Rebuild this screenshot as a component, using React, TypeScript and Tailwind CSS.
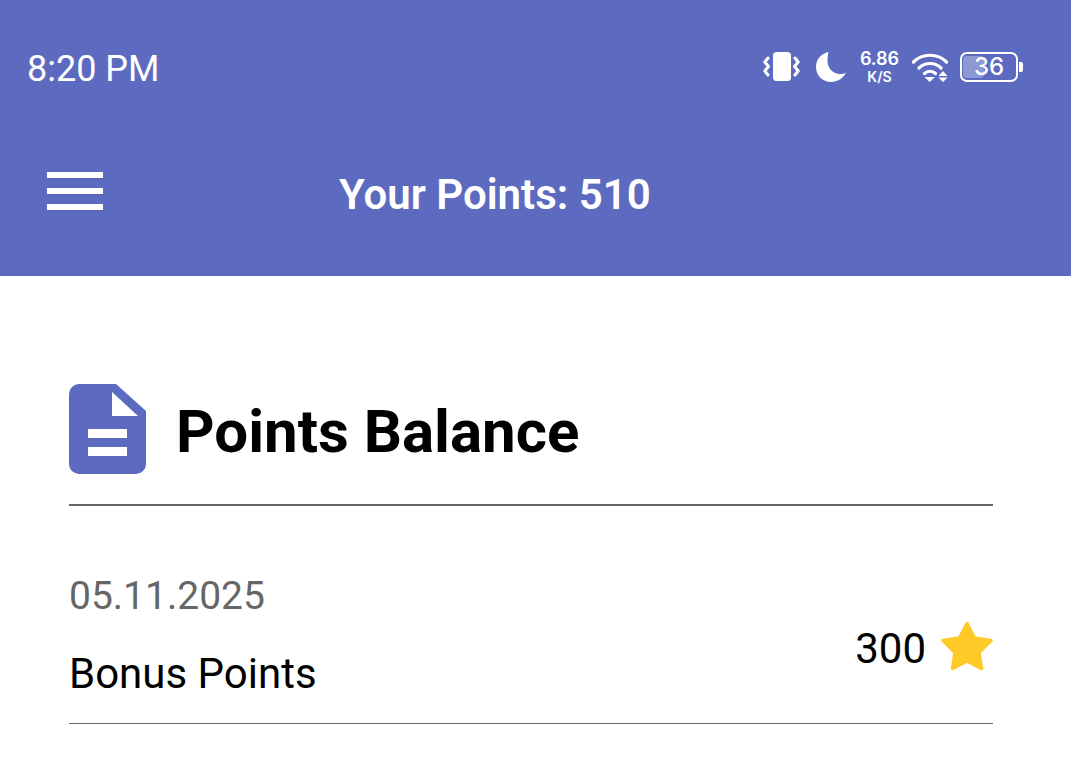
import React from "react";

const Vibrate = () => (
  <svg width="37" height="30" viewBox="0 0 37 30" className="block">
    <rect x="10" y="0" width="18" height="29" rx="3.5" fill="#fff" />
    <path d="M5 6 L1.8 10 L5.5 14.5 L1.8 19 L5 23" fill="none" stroke="#fff" strokeWidth="3" strokeLinejoin="round" strokeLinecap="round" />
    <path d="M32 6 L35.2 10 L31.5 14.5 L35.2 19 L32 23" fill="none" stroke="#fff" strokeWidth="3" strokeLinejoin="round" strokeLinecap="round" />
  </svg>
);

const Moon = () => (
  <svg width="30" height="30" viewBox="0 0 30 30" className="block">
    <path d="M12.5 0 C5 1.5 0 7.5 0 15 C0 23.5 6.7 30 15 30 C21.5 30 27 26.5 30 20.5 C28.5 21.5 26.5 22 24 22 C17 22 11.5 16 11.5 9 C11.5 6 11.8 2.5 12.5 0 Z" fill="#fff" />
  </svg>
);

const Wifi = () => (
  <svg width="36" height="29" viewBox="0 0 36 29" className="block">
    <path d="M1.5 9 C10.5 0 25.5 0 34.5 9" fill="none" stroke="#fff" strokeWidth="3.2" strokeLinecap="round" />
    <path d="M7 15 C13 9 23 9 29 15" fill="none" stroke="#fff" strokeWidth="3.2" strokeLinecap="round" />
    <path d="M12.5 20.5 C15.5 17.5 20.5 17.5 23.5 20.5" fill="none" stroke="#fff" strokeWidth="3.2" strokeLinecap="round" />
    <path d="M12.5 24 L23 24 L17.7 29 Z" fill="#fff" />
    <path d="M31 18 L35.5 23 L26.5 23 Z" fill="#fff" />
    <path d="M26.5 24.5 L35.5 24.5 L31 29 Z" fill="#fff" />
  </svg>
);

const FileDoc = () => (
  <svg width="77" height="90" viewBox="0 0 77 90" className="block shrink-0">
    <path d="M10 0 H47 L77 27 V80 A10 10 0 0 1 67 90 H10 A10 10 0 0 1 0 80 V10 A10 10 0 0 1 10 0 Z" fill="#5c6bc0" />
    <path d="M43 8 L69 32 H43 Z" fill="#fff" />
    <rect x="19" y="45" width="39" height="9" fill="#fff" />
    <rect x="19" y="63" width="39" height="9" fill="#fff" />
  </svg>
);

const Star = () => (
  <svg width="52" height="50" viewBox="0 0 52 50" className="block shrink-0">
    <path d="M26 2.5 L33.5 17 L50 19.5 L38 31.5 L40.5 47.5 L26 40 L11.5 47.5 L14 31.5 L2 19.5 L18.5 17 Z" fill="#ffca28" stroke="#ffca28" strokeWidth="3.5" strokeLinejoin="round" />
  </svg>
);

export default function App() {
  return (
    <div className="h-[770px] w-[1071px] overflow-hidden bg-white font-['Roboto',sans-serif]">
      <header className="flex h-[276px] flex-col bg-[#5c6bc0] text-white">
        <div className="flex h-[136px] items-center justify-between pl-[27px] pr-[48px]">
          <span className="mt-[2px] text-[36px] leading-none">8:20 PM</span>
          <div className="-mt-[2px] flex items-center">
            <Vibrate />
            <div className="ml-[16px]"><Moon /></div>
            <div className="ml-[14px] flex w-[39px] flex-col items-center font-['Inter',sans-serif] font-semibold leading-none">
              <span className="text-[18px] leading-[20px]">6.86</span>
              <span className="text-[14px] leading-[16px]">K/S</span>
            </div>
            <div className="ml-[13px]"><Wifi /></div>
            <div className="relative ml-[12px] flex h-[30px] w-[58px] items-center justify-center rounded-[7px] border-2 border-white">
              <div className="absolute bottom-[2px] left-[1px] top-[2px] w-[21px] rounded-[4px] bg-white/30" />
              <span className="relative font-['Inter',sans-serif] text-[24px] font-medium leading-none">36</span>
            </div>
            <div className="ml-[1px] h-[10px] w-[4px] rounded-r-[2px] bg-white" />
          </div>
        </div>
        <div className="flex h-[114px] items-center pl-[47px]">
          <div className="-mt-[4px] flex w-[56px] flex-col gap-[10px]">
            <div className="h-[6px] bg-white" />
            <div className="h-[6px] bg-white" />
            <div className="h-[6px] bg-white" />
          </div>
          <h1 className="ml-[236px] mt-[3px] text-[42px] font-semibold leading-none">Your Points: 510</h1>
        </div>
      </header>
      <main className="px-[69px] pr-[78px] pt-[108px]">
        <div className="flex items-center gap-[30px] border-b-2 border-[#666] pb-[30px]">
          <FileDoc />
          <h2 className="mt-[6px] text-[60px] font-bold leading-none text-black">Points Balance</h2>
        </div>
        <div className="flex items-center justify-between border-b border-[#666] pb-[27px] pt-[67px]">
          <div className="flex flex-col">
            <span className="mt-[1px] text-[39px] leading-[44px] text-[#666]">05.11.2025</span>
            <span className="mt-[34px] text-[42px] leading-[44px] text-black">Bonus Points</span>
          </div>
          <div className="mt-[23px] flex items-center gap-[15px]">
            <span className="mt-[6px] text-[42px] leading-none text-black">300</span>
            <Star />
          </div>
        </div>
      </main>
    </div>
  );
}
